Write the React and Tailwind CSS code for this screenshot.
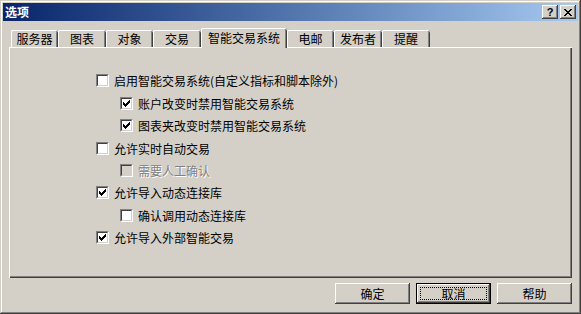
import React from "react";

function Check() {
  return (
    <svg width="7" height="7" viewBox="0 0 7 7" shapeRendering="crispEdges" className="block">
      <path
        d="M0 2h1v3h-1z M1 3h1v3h-1z M2 4h1v3h-1z M3 3h1v3h-1z M4 2h1v3h-1z M5 1h1v3h-1z M6 0h1v3h-1z"
        fill="#000"
      />
    </svg>
  );
}

function Checkbox({ checked, disabled }) {
  return (
    <div className="w-[13px] h-[13px] shrink-0 border border-t-[#808080] border-l-[#808080] border-b-[#ffffff] border-r-[#ffffff]">
      <div
        className={
          "w-full h-full border border-t-[#404040] border-l-[#404040] border-b-[#d4d0c8] border-r-[#d4d0c8] flex items-center justify-center " +
          (disabled ? "bg-[#d4d0c8]" : "bg-white")
        }
      >
        {checked ? <Check /> : null}
      </div>
    </div>
  );
}

function Row({ checked, disabled, indent, label, gap }) {
  return (
    <div className={"flex items-center h-[13px] " + (indent ? "pl-[24px] " : "") + gap}>
      <Checkbox checked={checked} disabled={disabled} />
      <span
        className={
          "ml-[5px] leading-[13px] whitespace-nowrap " +
          (disabled ? "text-[#808080] [text-shadow:1px_1px_0_#ffffff]" : "text-black")
        }
      >
        {label}
      </span>
    </div>
  );
}

function Tab({ label, w, selected }) {
  if (selected) {
    return (
      <div
        className={
          "h-[20px] -mb-[1px] relative z-10 bg-[#d4d0c8] rounded-t-[2px] flex items-center justify-center pb-[2px] shadow-[inset_1px_0_0_#ffffff,inset_0_1px_0_#ffffff,inset_-1px_0_0_#404040,inset_-2px_0_0_#808080] " +
          w
        }
      >
        <span className="leading-[13px] whitespace-nowrap">{label}</span>
      </div>
    );
  }
  return (
    <div
      className={
        "h-[17px] bg-[#d4d0c8] rounded-t-[2px] flex items-center justify-center shadow-[inset_1px_0_0_#ffffff,inset_0_1px_0_#ffffff,inset_-1px_0_0_#404040,inset_-2px_0_0_#808080] " +
        w
      }
    >
      <span className="leading-[13px] whitespace-nowrap">{label}</span>
    </div>
  );
}

export default function App() {
  return (
    <div className="w-[581px] h-[314px] bg-[#d4d0c8] p-[3px] flex flex-col shadow-[inset_-1px_-1px_0_#404040,inset_1px_1px_0_#d4d0c8,inset_-2px_-2px_0_#808080,inset_2px_2px_0_#ffffff] font-['Noto_Sans_CJK_SC','Noto_Sans',sans-serif] text-[12px] text-black select-none">
      {/* Title bar */}
      <div className="h-[18px] shrink-0 flex items-center justify-between bg-linear-to-r from-[#0a246a] to-[#a6caf0] pl-[2px] pr-[2px]">
        <span className="text-white font-bold text-[12px] leading-[18px]">选项</span>
        <div className="flex gap-[2px]">
          <div className="w-[16px] h-[14px] bg-[#d4d0c8] flex items-center justify-center shadow-[inset_-1px_-1px_0_#404040,inset_1px_1px_0_#ffffff,inset_-2px_-2px_0_#808080]">
            <span className="font-['Liberation_Sans',sans-serif] font-bold text-[11px] leading-[11px] text-black">?</span>
          </div>
          <div className="w-[16px] h-[14px] bg-[#d4d0c8] flex items-center justify-center shadow-[inset_-1px_-1px_0_#404040,inset_1px_1px_0_#ffffff,inset_-2px_-2px_0_#808080]">
            <svg width="8" height="7" viewBox="0 0 8 7" shapeRendering="crispEdges" className="block">
              <path
                d="M0 0h2v1h-2z M6 0h2v1h-2z M1 1h2v1h-2z M5 1h2v1h-2z M2 2h4v1h-4z M3 3h2v1h-2z M2 4h4v1h-4z M1 5h2v1h-2z M5 5h2v1h-2z M0 6h2v1h-2z M6 6h2v1h-2z"
                fill="#000"
              />
            </svg>
          </div>
        </div>
      </div>

      {/* Body */}
      <div className="flex flex-col px-[6px] pt-[7px]">
        <div className="h-[19px] flex items-end pl-[2px]">
          <Tab label="服务器" w="w-[47px]" />
          <Tab label="图表" w="w-[48px]" />
          <Tab label="对象" w="w-[47px]" />
          <Tab label="交易" w="w-[48px]" />
          <Tab label="智能交易系统" w="w-[86px]" selected />
          <Tab label="电邮" w="w-[47px]" />
          <Tab label="发布者" w="w-[48px]" />
          <Tab label="提醒" w="w-[48px]" />
        </div>

        <div className="h-[231px] flex flex-col pt-[27px] pl-[87px] shadow-[inset_1px_1px_0_#ffffff,inset_-1px_-1px_0_#404040,inset_-2px_-2px_0_#808080]">
          <Row label="启用智能交易系统(自定义指标和脚本除外)" gap="" />
          <Row label="账户改变时禁用智能交易系统" checked indent gap="mt-[10px]" />
          <Row label=" 图表夹改变时禁用智能交易系统" checked indent gap="mt-[9px]" />
          <Row label="允许实时自动交易" gap="mt-[10px]" />
          <Row label="需要人工确认" disabled indent gap="mt-[9px]" />
          <Row label="允许导入动态连接库" checked gap="mt-[9px]" />
          <Row label="确认调用动态连接库" indent gap="mt-[10px]" />
          <Row label="允许导入外部智能交易" checked gap="mt-[9px]" />
        </div>

        <div className="mt-[5px] flex justify-end gap-[6px]">
          <div className="w-[75px] h-[21px] flex items-center justify-center shadow-[inset_-1px_-1px_0_#404040,inset_1px_1px_0_#ffffff,inset_-2px_-2px_0_#808080]">
            <span className="leading-[13px]">确定</span>
          </div>
          <div className="w-[75px] h-[21px] border border-black shadow-[inset_-1px_-1px_0_#404040,inset_1px_1px_0_#ffffff,inset_-2px_-2px_0_#808080] p-[3px]">
            <div className="w-full h-full border border-dotted border-black flex items-center justify-center">
              <span className="leading-[13px]">取消</span>
            </div>
          </div>
          <div className="w-[75px] h-[21px] flex items-center justify-center shadow-[inset_-1px_-1px_0_#404040,inset_1px_1px_0_#ffffff,inset_-2px_-2px_0_#808080]">
            <span className="leading-[13px]">帮助</span>
          </div>
        </div>
      </div>
    </div>
  );
}
